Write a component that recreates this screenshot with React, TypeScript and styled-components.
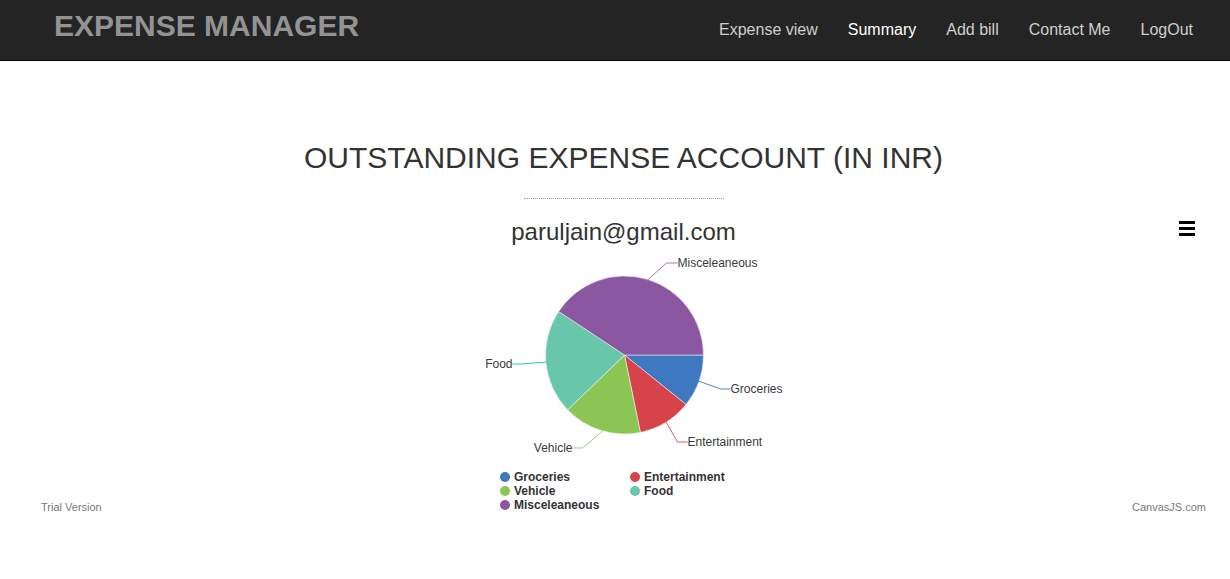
import React from "react";
import styled, { createGlobalStyle } from "styled-components";

const GlobalStyle = createGlobalStyle`
  html, body { margin: 0; padding: 0; background: #fff; }
  body { font-family: "Liberation Sans", Arial, sans-serif; color: #333; }
  * { box-sizing: border-box; }
`;

const Navbar = styled.nav`
  height: 61px;
  background: #242424;
  border-bottom: 1px solid #080808;
  display: flex;
  align-items: flex-start;
  justify-content: space-between;
  padding: 0 22px 0 54px;
`;

const Brand = styled.div`
  margin-top: 9px;
  font-size: 30px;
  line-height: 33px;
  font-weight: 700;
  color: #939393;
`;

const NavList = styled.ul`
  list-style: none;
  margin: 0;
  padding: 0;
  height: 60px;
  display: flex;
  align-items: center;
`;

const NavLink = styled.li<{ $active?: boolean }>`
  padding: 0 15px;
  font-size: 16px;
  line-height: 20px;
  color: ${(p) => (p.$active ? "#ffffff" : "#cfcfcf")};
`;

const Main = styled.main`
  display: flex;
  flex-direction: column;
  align-items: center;
  padding: 80px 14px 40px 31px;
`;

const Title = styled.h2`
  margin: 0;
  font-size: 30px;
  line-height: 33px;
  font-weight: 400;
  color: #333;
`;

const Divider = styled.hr`
  width: 200px;
  margin: 24px 0 0;
  border: 0;
  border-top: 1px dotted #999;
`;

const Chart = styled.section`
  position: relative;
  margin-top: 11px;
  width: 100%;
  display: flex;
  flex-direction: column;
  align-items: center;
`;

const ChartTitle = styled.div`
  padding-top: 8px;
  font-size: 24px;
  line-height: 28px;
  color: #333;
`;

const MenuButton = styled.div`
  position: absolute;
  top: 10px;
  right: 21px;
  width: 16px;
  height: 16px;
`;

const PieSvg = styled.svg`
  margin-top: 4px;
  display: block;
  overflow: visible;
`;

const Footer = styled.div`
  width: 100%;
  margin-top: 8px;
  display: grid;
  grid-template-columns: 1fr auto 1fr;
  align-items: end;
`;

const Credit = styled.div<{ $right?: boolean }>`
  padding: 0 10px;
  font-size: 11px;
  line-height: 14px;
  color: #7a7a7a;
  text-align: ${(p) => (p.$right ? "right" : "left")};
`;

const Legend = styled.div`
  display: grid;
  grid-template-columns: 130px 117px;
  padding-bottom: 2px;
`;

const LegendItem = styled.div`
  display: flex;
  align-items: center;
  gap: 4px;
  font-size: 12px;
  line-height: 14px;
  font-weight: 700;
  color: #333;
`;

const Marker = styled.span<{ $color: string }>`
  width: 10px;
  height: 10px;
  border-radius: 50%;
  background: ${(p) => p.$color};
`;

type Slice = {
  name: string;
  value: number;
  color: string;
  line: string;
  path: [number, number][];
  anchor: "start" | "end";
};

const slices: Slice[] = [
  { name: "Groceries", value: 38.8, color: "#3d78c0", line: "#4f86c8", path: [[244.5, 131], [266.5, 139], [276.5, 139]], anchor: "start" },
  { name: "Entertainment", value: 39.6, color: "#d6434a", line: "#e05a60", path: [[211.5, 171], [223.5, 192], [233.5, 192]], anchor: "start" },
  { name: "Vehicle", value: 57.6, color: "#8bc553", line: "#a3d47a", path: [[148.5, 181], [128.5, 198], [118.5, 198]], anchor: "end" },
  { name: "Food", value: 77.5, color: "#68c6ab", line: "#1fc8b8", path: [[92.5, 112], [66.5, 114], [58.5, 114]], anchor: "end" },
  { name: "Misceleaneous", value: 146.5, color: "#8a57a0", line: "#a07ab3", path: [[192.5, 31], [212.5, 13], [223.5, 13]], anchor: "start" },
];

const CX = 170.5;
const CY = 105;
const R = 79;

function arcPath(a0: number, a1: number) {
  const r0 = (a0 * Math.PI) / 180;
  const r1 = (a1 * Math.PI) / 180;
  const x0 = CX + R * Math.cos(r0);
  const y0 = CY + R * Math.sin(r0);
  const x1 = CX + R * Math.cos(r1);
  const y1 = CY + R * Math.sin(r1);
  const large = a1 - a0 > 180 ? 1 : 0;
  return `M${CX},${CY} L${x0},${y0} A${R},${R} 0 ${large} 1 ${x1},${y1} Z`;
}

function PieChart() {
  const total = slices.reduce((s, d) => s + d.value, 0);
  let acc = 0;
  return (
    <PieSvg width={340} height={212} viewBox="0 0 340 212">
      {slices.map((s) => {
        const a0 = (acc / total) * 360;
        acc += s.value;
        const a1 = (acc / total) * 360;
        return <path key={s.name} d={arcPath(a0, a1)} fill={s.color} stroke="#fff" strokeWidth={0.5} />;
      })}
      {slices.map((s) => {
        const pts = s.path.map((p) => p.join(",")).join(" ");
        const end = s.path[s.path.length - 1];
        return (
          <g key={s.name + "-label"}>
            <polyline points={pts} fill="none" stroke={s.line} strokeWidth={1} />
            <text
              x={end[0]}
              y={end[1]}
              textAnchor={s.anchor}
              dominantBaseline="central"
              fontFamily="'Liberation Sans', Arial, sans-serif"
              fontSize={12}
              fill="#3a3a3a"
            >
              {s.name}
            </text>
          </g>
        );
      })}
    </PieSvg>
  );
}

const legendOrder = ["Groceries", "Entertainment", "Vehicle", "Food", "Misceleaneous"];

export default function App() {
  return (
    <>
      <GlobalStyle />
      <Navbar>
        <Brand>EXPENSE MANAGER</Brand>
        <NavList>
          <NavLink>Expense view</NavLink>
          <NavLink $active>Summary</NavLink>
          <NavLink>Add bill</NavLink>
          <NavLink>Contact Me</NavLink>
          <NavLink>LogOut</NavLink>
        </NavList>
      </Navbar>
      <Main>
        <Title>OUTSTANDING EXPENSE ACCOUNT (IN INR)</Title>
        <Divider />
        <Chart>
          <ChartTitle>paruljain@gmail.com</ChartTitle>
          <MenuButton>
            <svg width="16" height="16" viewBox="0 0 16 16">
              <rect x="0" y="1" width="16" height="3" fill="#000" />
              <rect x="0" y="7" width="16" height="3" fill="#000" />
              <rect x="0" y="13" width="16" height="3" fill="#000" />
            </svg>
          </MenuButton>
          <PieChart />
          <Footer>
            <Credit>Trial Version</Credit>
            <Legend>
              {legendOrder.map((n) => {
                const s = slices.find((x) => x.name === n)!;
                return (
                  <LegendItem key={n}>
                    <Marker $color={s.color} />
                    {n}
                  </LegendItem>
                );
              })}
            </Legend>
            <Credit $right>CanvasJS.com</Credit>
          </Footer>
        </Chart>
      </Main>
    </>
  );
}
